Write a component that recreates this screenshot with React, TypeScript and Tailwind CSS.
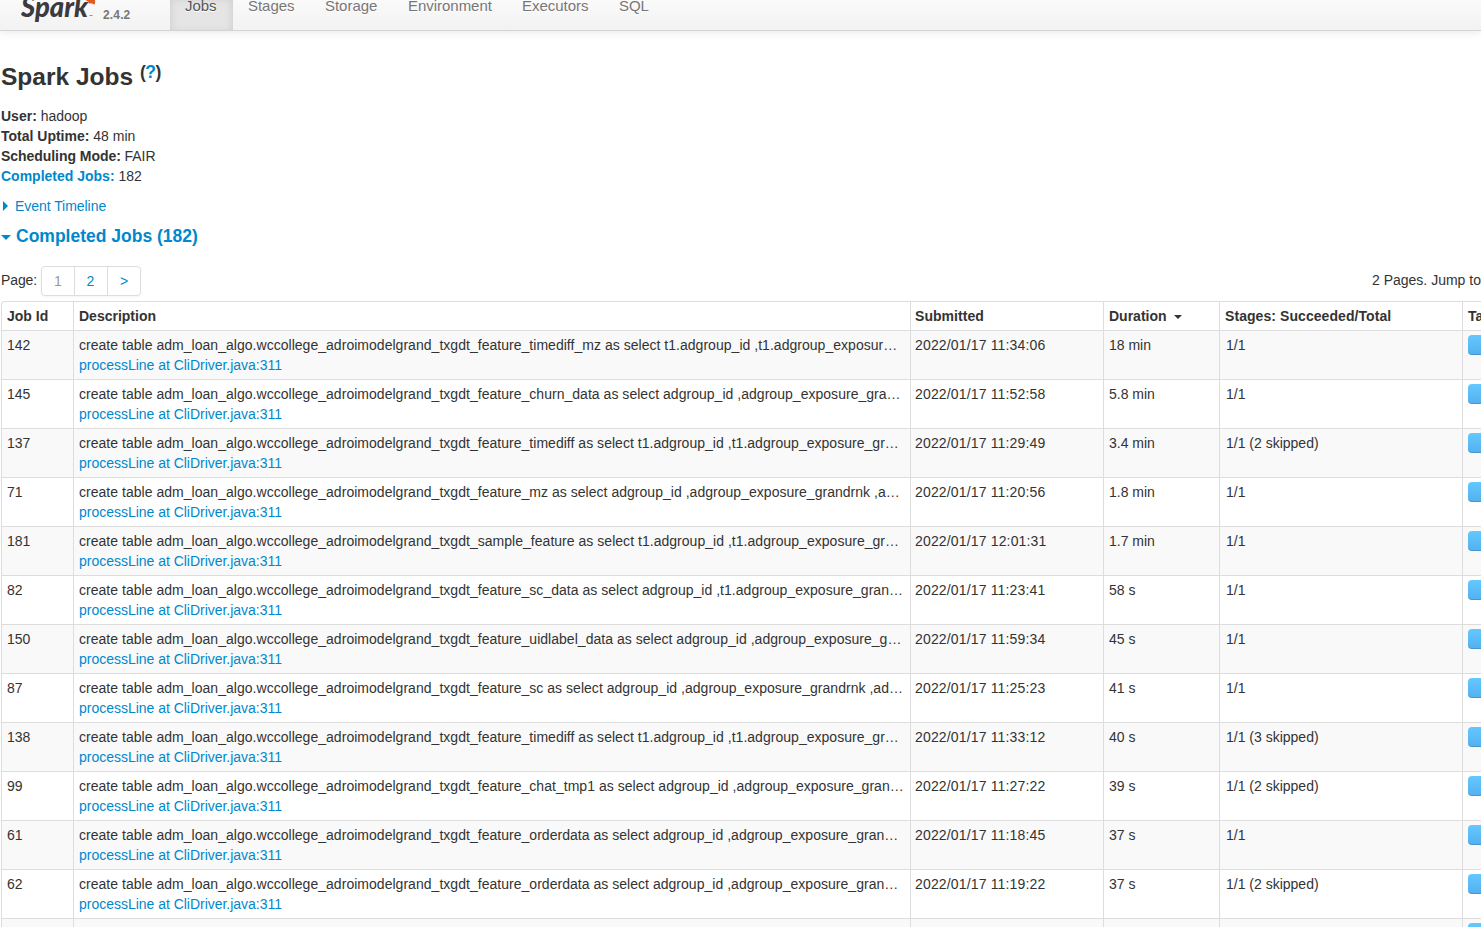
const TABS = [
  { name: "Jobs", width: "w-[63px]" },
  { name: "Stages", width: "w-[77px]" },
  { name: "Storage", width: "w-[83px]" },
  { name: "Environment", width: "w-[114px]" },
  { name: "Executors", width: "w-[97px]" },
  { name: "SQL", width: "w-[60px]" },
];

const PREFIX = "create table adm_loan_algo.wccollege_adroimodelgrand_txgdt_";

const JOBS = [
  { id: 142, desc: "feature_timediff_mz as select t1.adgroup_id ,t1.adgroup_exposur…", submitted: "2022/01/17 11:34:06", duration: "18 min", stages: "1/1" },
  { id: 145, desc: "feature_churn_data as select adgroup_id ,adgroup_exposure_gra…", submitted: "2022/01/17 11:52:58", duration: "5.8 min", stages: "1/1" },
  { id: 137, desc: "feature_timediff as select t1.adgroup_id ,t1.adgroup_exposure_gr…", submitted: "2022/01/17 11:29:49", duration: "3.4 min", stages: "1/1 (2 skipped)" },
  { id: 71, desc: "feature_mz as select adgroup_id ,adgroup_exposure_grandrnk ,a…", submitted: "2022/01/17 11:20:56", duration: "1.8 min", stages: "1/1" },
  { id: 181, desc: "sample_feature as select t1.adgroup_id ,t1.adgroup_exposure_gr…", submitted: "2022/01/17 12:01:31", duration: "1.7 min", stages: "1/1" },
  { id: 82, desc: "feature_sc_data as select adgroup_id ,t1.adgroup_exposure_gran…", submitted: "2022/01/17 11:23:41", duration: "58 s", stages: "1/1" },
  { id: 150, desc: "feature_uidlabel_data as select adgroup_id ,adgroup_exposure_g…", submitted: "2022/01/17 11:59:34", duration: "45 s", stages: "1/1" },
  { id: 87, desc: "feature_sc as select adgroup_id ,adgroup_exposure_grandrnk ,ad…", submitted: "2022/01/17 11:25:23", duration: "41 s", stages: "1/1" },
  { id: 138, desc: "feature_timediff as select t1.adgroup_id ,t1.adgroup_exposure_gr…", submitted: "2022/01/17 11:33:12", duration: "40 s", stages: "1/1 (3 skipped)" },
  { id: 99, desc: "feature_chat_tmp1 as select adgroup_id ,adgroup_exposure_gran…", submitted: "2022/01/17 11:27:22", duration: "39 s", stages: "1/1 (2 skipped)" },
  { id: 61, desc: "feature_orderdata as select adgroup_id ,adgroup_exposure_gran…", submitted: "2022/01/17 11:18:45", duration: "37 s", stages: "1/1" },
  { id: 62, desc: "feature_orderdata as select adgroup_id ,adgroup_exposure_gran…", submitted: "2022/01/17 11:19:22", duration: "37 s", stages: "1/1 (2 skipped)" },
];

const CELL = "border-l border-t border-[#dddddd] py-1 align-top whitespace-nowrap";

function Navbar() {
  return (
    <nav className="flex h-[31px] shrink-0 border-b border-[#d4d4d4] bg-linear-to-b from-[#fafafa] to-[#f2f2f2] shadow-[0_1px_10px_rgba(0,0,0,0.1)]">
      <div className="flex w-[170px] shrink-0 pl-[21px]">
        <svg width="76" height="30" viewBox="0 0 76 30">
          <text x="0" y="16.500" fontSize="28" fontStyle="italic" fontWeight="900" fill="#3c3a3e" fontFamily="Lato, sans-serif" textLength="67" lengthAdjust="spacingAndGlyphs">
            Spark
          </text>
          <path d="M64.500 0h9.500c.3 1.700.2 3.200-.4 4.600l-3.600-1.300-2 .4-.8-1.900z" fill="#e25a1c" />
          <path d="M68.500 15.500h3" stroke="#777" strokeWidth="0.8" />
        </svg>
        <span className="mt-[5px] ml-[6px] text-[12px] leading-5 font-bold tracking-[0.15px] text-[#777777]">2.4.2</span>
      </div>
      {TABS.map((tab) => (
        <a
          key={tab.name}
          className={`${tab.width} shrink-0 -mt-[5px] pl-[15px] text-[15px] leading-[21px] tracking-[-0.03px] [text-shadow:0_1px_0_#fff] ${
            tab.name === "Jobs"
              ? "bg-[#e5e5e5] text-[#555555] shadow-[inset_0_3px_8px_rgba(0,0,0,0.125)]"
              : "text-[#777777]"
          }`}
        >
          {tab.name}
        </a>
      ))}
    </nav>
  );
}

function Summary() {
  return (
    <div className="pl-px">
      <h3 className="mt-[26px] flex h-10 items-center text-[24.5px] font-bold">
        Spark Jobs
        <sup className="top-[-5px] ml-[7px] text-[17.5px] leading-5 tracking-[-0.6px]">
          (<a className="text-[#0088cc]">?</a>)
        </sup>
      </h3>
      <ul className="mt-[9px]">
        <li><b>User:</b> hadoop</li>
        <li><b>Total Uptime:</b> 48 min</li>
        <li className="tracking-[-0.05px]"><b>Scheduling Mode:</b> FAIR</li>
        <li><b className="text-[#0088cc]">Completed Jobs:</b> 182</li>
      </ul>
      <div className="mt-[10px] flex items-center tracking-[-0.05px] text-[#0088cc]">
        <span className="ml-[2px] mr-[7px] border-y-5 border-l-5 border-y-transparent border-l-[#0088cc]" />
        Event Timeline
      </div>
      <h4 className="mt-[10px] flex items-center text-[17.5px] font-bold text-[#0088cc]">
        <span className="mt-[2px] mr-[5px] border-x-5 border-t-5 border-x-transparent border-t-[#0088cc]" />
        Completed Jobs (182)
      </h4>
    </div>
  );
}

function Pager() {
  return (
    <div className="mt-5 flex h-[30px] justify-between pl-px">
      <div className="flex">
        <span className="mt-1 w-10 tracking-[-0.1px]">Page:</span>
        <div className="flex divide-x divide-[#dddddd] rounded-sm border border-[#dddddd] text-center leading-[29px] shadow-[0_1px_2px_rgba(0,0,0,0.05)]">
          <span className="w-[33px] text-[#999999]">1</span>
          <a className="w-[33px] pr-px text-[#0088cc]">2</a>
          <a className="w-8 text-[#0088cc]">&gt;</a>
        </div>
      </div>
      <span className="mt-1 w-[109px] whitespace-nowrap">2 Pages. Jump to</span>
    </div>
  );
}

function TaskBar() {
  return (
    <div className="h-5 rounded-sm bg-linear-to-b from-[#64c8ff] to-[#54b0ef] shadow-[inset_0_-1px_0_rgba(0,0,0,0.15)]" />
  );
}

function JobsTable() {
  return (
    <table className="mt-[5px] ml-px w-[1580px] table-fixed border-separate border-spacing-0 rounded-tl-sm text-left">
      <colgroup>
        <col className="w-[72px]" />
        <col className="w-[837px]" />
        <col className="w-[193px]" />
        <col className="w-[116px]" />
        <col className="w-[243px]" />
        <col />
      </colgroup>
      <thead>
        <tr>
          <th className={`${CELL} rounded-tl-sm px-[5px]`}>Job Id</th>
          <th className={`${CELL} px-[5px]`}>Description</th>
          <th className={`${CELL} px-1 tracking-[0.05px]`}>Submitted</th>
          <th className={`${CELL} px-[5px]`}>
            <div className="flex items-center">
              Duration
              <span className="mt-[2px] ml-[7px] border-x-4 border-t-4 border-x-transparent border-t-[#333333]" />
            </div>
          </th>
          <th className={`${CELL} px-[5px] tracking-[0.07px]`}>Stages: Succeeded/Total</th>
          <th className={`${CELL} px-[5px]`}>Tasks (for all stages): Succeeded/Total</th>
        </tr>
      </thead>
      <tbody>
        {JOBS.map((job) => (
          <tr key={job.id} className="odd:bg-[#f9f9f9]">
            <td className={`${CELL} px-[5px]`}>{job.id}</td>
            <td className={`${CELL} px-[5px]`}>
              <div className="tracking-[0.03px]">{PREFIX + job.desc}</div>
              <a className="block tracking-[-0.02px] text-[#0088cc]">processLine at CliDriver.java:311</a>
            </td>
            <td className={`${CELL} px-1 tracking-[0.16px]`}>{job.submitted}</td>
            <td className={`${CELL} px-[5px]`}>{job.duration}</td>
            <td className={`${CELL} px-1.5`}>{job.stages}</td>
            <td className={`${CELL} px-[5px]`}><TaskBar /></td>
          </tr>
        ))}
        {/* next row, cut off by the bottom of the window */}
        <tr className="h-[49px] odd:bg-[#f9f9f9]">
          <td className={CELL} />
          <td className={CELL} />
          <td className={CELL} />
          <td className={CELL} />
          <td className={CELL} />
          <td className={`${CELL} px-[5px]`}><TaskBar /></td>
        </tr>
      </tbody>
    </table>
  );
}

export default function App() {
  return (
    <div className="flex h-[927px] w-[1481px] flex-col overflow-hidden bg-white font-['Liberation_Sans',Arial,sans-serif] text-[14px] leading-5 text-[#333333]">
      <Navbar />
      <Summary />
      <Pager />
      <JobsTable />
    </div>
  );
}
